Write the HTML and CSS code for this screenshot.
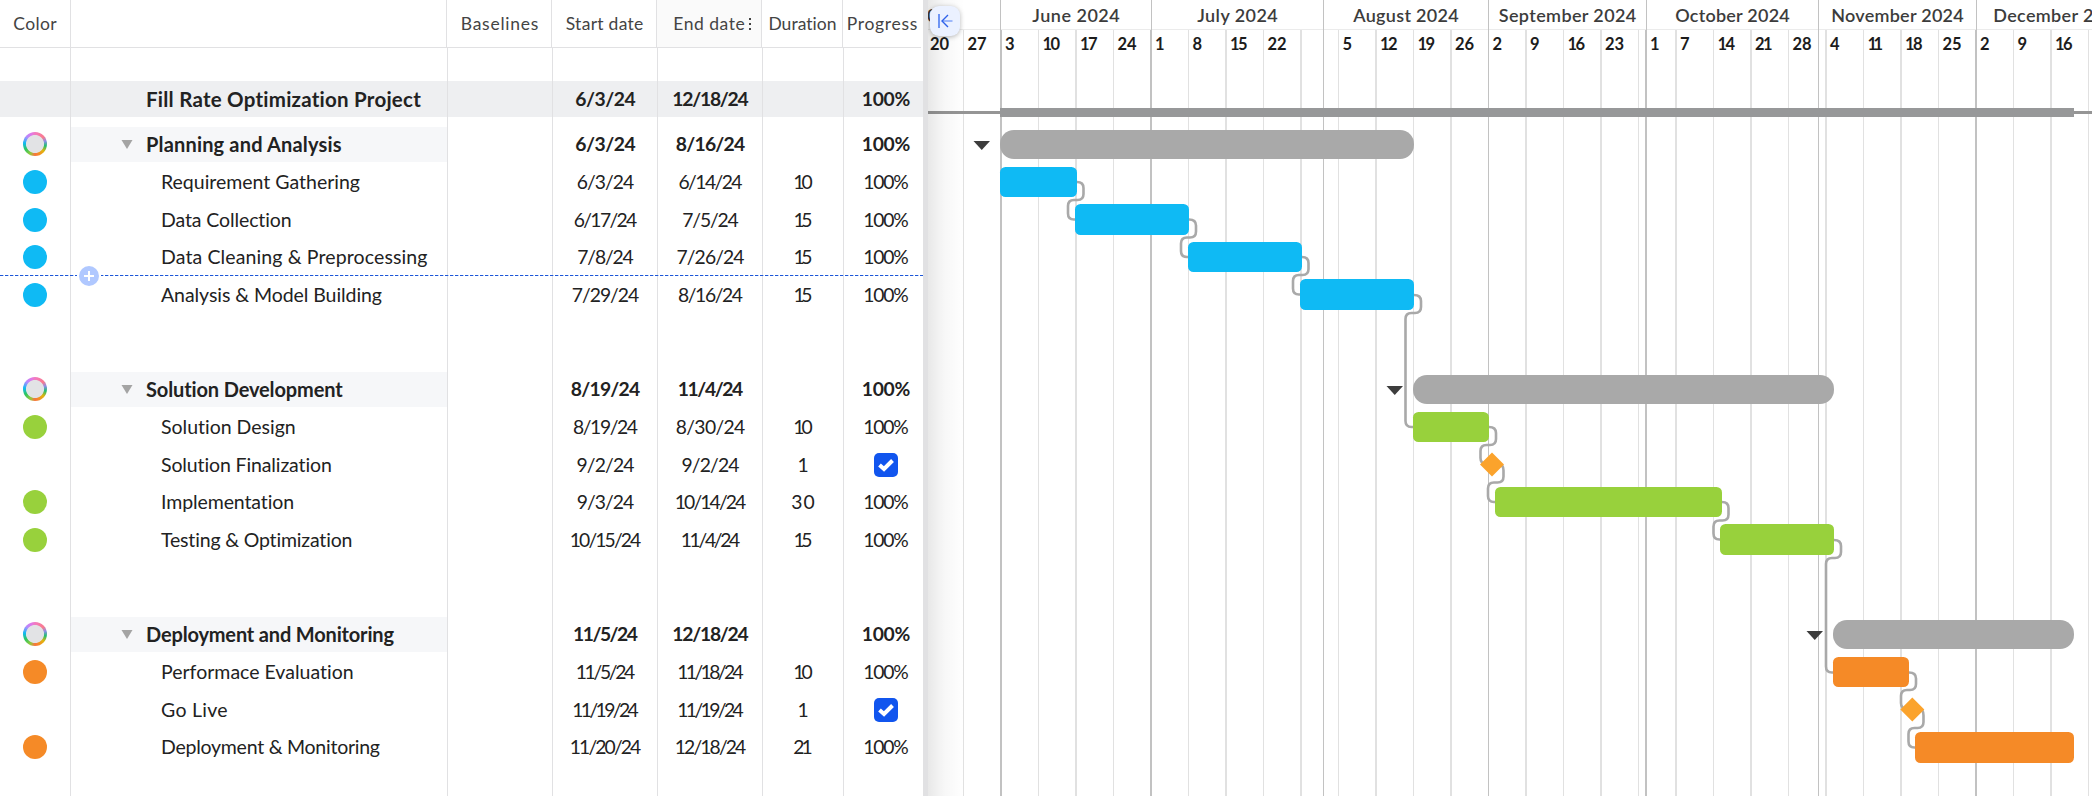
FILE: index.html
```html
<!DOCTYPE html>
<html lang="en">
<head>
<meta charset="utf-8">
<title>Fill Rate Optimization Project</title>
<link rel="stylesheet" href="styles.css">
</head>
<body>
<main class="app">
  <section class="table">
    <div class="thead">
      <div class="th th-color"><span data-w="42">Color</span></div>
      <div class="th th-name"></div>
      <div class="th th-base"><span data-w="76">Baselines</span></div>
      <div class="th th-start"><span data-w="76">Start date</span></div>
      <div class="th th-end"><span data-w="70">End date</span><i class="dots"></i></div>
      <div class="th th-dur"><span data-w="67">Duration</span></div>
      <div class="th th-prog"><span data-w="69">Progress</span></div>
    </div>
    <div class="tbody" id="rows"></div>
    <div class="insert-line"><svg class="plus" width="24" height="20" viewBox="0 0 24 20"><rect width="24" height="20" fill="#fff"/><circle cx="12" cy="10" r="10" fill="#b0c8ff"/><path d="M12 5v10M7 10h10" stroke="#fff" stroke-width="2"/></svg></div>
  </section>
  <div class="divider"></div>
  <section class="chart">
    <svg class="canvas" id="canvas" width="1164" height="796" viewBox="928 0 1164 796"></svg>
    <div class="months" id="months"></div>
    <div class="weeks" id="weeks"></div>
    <div class="edge-shadow"></div>
    <div class="collapse"><svg width="30" height="30" viewBox="0 0 30 30" fill="none" stroke-width="1.4"><path d="M9 8v14" stroke="#3a6df0"/><path d="M22.5 15H12" stroke="#7da0f8"/><path d="M18 9l-6 6 6 6" stroke="#2f62ea"/></svg></div>
  </section>
</main>
<script src="app.js"></script>
</body>
</html>
```
FILE: styles.css
```css
* { box-sizing: border-box; }
body { margin: 0; background: #fff; font-family: Lato, "Open Sans", sans-serif; color: #222; overflow: hidden; }
.app { display: flex; width: 2092px; height: 796px; overflow: hidden; }
span { white-space: nowrap; }

/* task table */
.table { position: relative; width: 923px; flex: none; }
.thead { display: flex; width: 921px; height: 48px; border-bottom: 1px solid #e1e1e3; }
.th { flex: none; display: flex; align-items: center; justify-content: center; border-right: 1px solid #e1e1e3; font-size: 17.5px; color: #444; }
.th-color { width: 71px; }
.th-name { width: 376px; }
.th-base, .th-start, .th-end { width: 105px; }
.th-base, .th-start { padding-left: 1px; }
.th-end { background: #fafafa; position: relative; }
.dots { position: absolute; right: 10px; top: 18px; width: 2px; height: 12px; background: linear-gradient(#444 2px, transparent 2px 5px, #444 5px 7px, transparent 7px 10px, #444 10px); }
.th-dur { width: 81px; padding-left: 1px; }
.th-prog { width: 78px; border: 0; }
.tbody { height: 748px; }
.row { display: flex; height: 38px; line-height: 38px; font-size: 19.5px; }
.row.short { height: 37px; }
.row.first { height: 33px; }
.row.after { height: 8px; }
.row.gap { height: 56px; }
.row.last { height: 30px; }
.row.project { height: 36px; line-height: 36px; font-size: 20.5px; background: #eeeff1; font-weight: 700; }
.row.group { font-weight: 700; font-size: 20px; }
.cell { flex: none; border-right: 1px solid #e1e1e3; display: flex; justify-content: center; }
.c-color { width: 71px; padding-top: 7px; }
.c-name { width: 377px; justify-content: flex-start; padding-left: 90px; }
.project .c-name, .group .c-name { padding-left: 75px; }
.group .c-name { background: linear-gradient(#fff 2px, #f6f7f9 2px 37px, #fff 37px); padding-left: 50px; }
.toggle { width: 25px; flex: none; padding-top: 15px; line-height: 0; }
.c-base, .c-start, .c-end { width: 105px; }
.c-start, .c-end, .c-dur, .c-prog { font-size: 19.3px; }
.c-start, .c-end { padding-left: 1px; }
.c-dur { width: 81px; }
.c-prog { width: 79px; border: 0; padding-left: 5px; }
.dot { width: 24px; height: 24px; border-radius: 50%; }
.blue { background: #0fbaf4; }
.green { background: #98d13c; }
.orange { background: #f58a27; }
.multi { background: radial-gradient(circle, #e2e3e5 8.6px, transparent 9.4px), conic-gradient(#f27bc0, #fb7a8c 50deg, #8b8fe8 75deg, #21c070 100deg, #e2b50c 130deg, #f58a27 160deg, #f8743f 180deg, #98c83c 205deg, #2fc75b 240deg, #0fbaf4 275deg, #b08cff 310deg, #e078e8 340deg, #f27bc0); }
.check { margin-top: 7px; }
.insert-line { position: absolute; left: 0; top: 275px; width: 923px; height: 1px; background: repeating-linear-gradient(90deg, #1c56d8 0 3px, #b4c8f4 3px 4px, #fff 4px 5px); }
.plus { position: absolute; left: 77px; top: -9px; }
.divider { width: 5px; flex: none; background: #e1e1e3; }

/* timeline */
.chart { position: relative; flex: 1; overflow: hidden; }
.canvas { position: absolute; left: 0; top: 0; }
.months { position: relative; display: flex; height: 30px; margin-left: -93px; border-bottom: 1px solid #ebebeb; }
.month { flex: none; text-align: center; border-right: 1px solid #c2c2c2; font-size: 18px; font-weight: 600; color: #3c3c3c; line-height: 30px; height: 30px; }
.weeks { position: relative; display: flex; margin-left: -3px; font-size: 16.5px; font-weight: 700; color: #1c1c1c; line-height: 28px; }
.week { flex: none; padding-left: 5px; height: 28px; }
.edge-shadow { position: absolute; left: 0; top: 0; width: 36px; height: 796px; background: linear-gradient(90deg, rgba(0,0,0,.09), rgba(0,0,0,.03) 45%, transparent); }
.collapse { position: absolute; left: 2px; top: 6px; width: 30px; height: 30px; border-radius: 9px; background: #ebf1ff; box-shadow: 0 1px 5px rgba(0,0,0,.28); }
```
FILE: app.js
```js
// [kind, color, name, name width, start, width, end, width, duration, width]
const ROWS = [
  ['first'],
  ['project', '', 'Fill Rate Optimization Project', 274, '6/3/24', 59, '12/18/24', 75],
  ['after'],
  ['group', 'multi', 'Planning and Analysis', 194, '6/3/24', 59, '8/16/24', 68],
  ['task', 'blue', 'Requirement Gathering', 197.5, '6/3/24', 56, '6/14/24', 62.5, '10', 18],
  ['task short', 'blue', 'Data Collection', 129.5, '6/17/24', 62, '7/5/24', 55, '15', 17.5],
  ['task', 'blue', 'Data Cleaning & Preprocessing', 265, '7/8/24', 55, '7/26/24', 66.5, '15', 17.5],
  ['task', 'blue', 'Analysis & Model Building', 219.5, '7/29/24', 66, '8/16/24', 63.5, '15', 17.5],
  ['gap'],
  ['group', 'multi', 'Solution Development', 195.5, '8/19/24', 68, '11/4/24', 64],
  ['task', 'green', 'Solution Design', 133.5, '8/19/24', 63.5, '8/30/24', 68, '10', 18],
  ['task short', 'check', 'Solution Finalization', 170, '9/2/24', 56.5, '9/2/24', 56.5, '1', 6],
  ['task', 'green', 'Implementation', 132, '9/3/24', 56, '10/14/24', 70, '30', 22],
  ['task', 'green', 'Testing & Optimization', 191, '10/15/24', 70, '11/4/24', 58, '15', 17.5],
  ['gap'],
  ['group', 'multi', 'Deployment and Monitoring', 246.5, '11/5/24', 63.5, '12/18/24', 75],
  ['task', 'orange', 'Performace Evaluation', 191.5, '11/5/24', 58, '11/18/24', 65, '10', 18],
  ['task short', 'check', 'Go Live', 65, '11/19/24', 65, '11/19/24', 65, '1', 6],
  ['task', 'orange', 'Deployment & Monitoring', 217.5, '11/20/24', 70, '12/18/24', 70, '21', 18],
  ['last']
];
const text = (t, w) => t ? `<span data-w="${w}">${t.replace('&', '&amp;')}</span>` : '';
const CHECK = '<svg class="check" width="24" height="24" viewBox="0 0 24 24"><rect width="24" height="24" rx="5" fill="#1155ee"/><path d="M5.5 12l4.5 4 8.5-8.5" fill="none" stroke="#fff" stroke-width="4"/></svg>';
const TOGGLE = '<div class="toggle"><svg width="12" height="9"><path d="M.5 0h11L6 9z" fill="#a4a4a4"/></svg></div>';
document.getElementById('rows').innerHTML = ROWS.map(([kind, color, name, nw, s, sw, e, ew, d, dw]) => {
  const bold = kind === 'project' || kind === 'group';
  const dot = color && color !== 'check' ? `<div class="dot ${color}"></div>` : '';
  const prog = !name ? '' : color === 'check' ? CHECK : text('100%', bold ? 47 : 44);
  return `<div class="row ${kind}"><div class="cell c-color">${dot}</div>` +
    `<div class="cell c-name">${kind === 'group' ? TOGGLE : ''}${text(name, nw)}</div><div class="cell c-base"></div>` +
    `<div class="cell c-start">${text(s, sw)}</div><div class="cell c-end">${text(e, ew)}</div>` +
    `<div class="cell c-dur">${text(d, dw)}</div><div class="cell c-prog">${prog}</div></div>`;
}).join('');

// timeline header
document.getElementById('months').innerHTML = [
  ['May 2024', 166, 81], ['June 2024', 151, 86], ['July 2024', 172, 79], ['August 2024', 165, 104],
  ['September 2024', 158, 136], ['October 2024', 172, 113], ['November 2024', 158, 131], ['December 2024', 166, 131]
].map(([t, w, tw]) => `<div class="month" style="width:${w}px">${text(t, tw)}</div>`).join('');
document.getElementById('weeks').innerHTML =
  '20 27 3 10 17 24 1 8 15 22 - 5 12 19 26 2 9 16 23 -7.5 1.30 7 14 21 28 4 11 18 25 2 9 16'.split(' ').map(v => {
    let w = 37.5, t = v;
    if (v === '-') t = '';
    if (v === '-7.5') { w = 7.5; t = ''; }
    if (v === '1.30') { w = 30; t = '1'; }
    const tw = t === '11' ? 14 : t === '21' ? 16 : t[0] === '1' ? 16 : 17.5;
    return `<div class="week" style="width:${w}px">${text(t, tw)}</div>`;
  }).join('');

// timeline canvas: grid, links, bars
const g = [];
const rect = (x, y, x2, y2, fill, r = 0) => g.push(`<rect x="${x}" y="${y}" width="${x2 - x}" height="${y2 - y}" rx="${r}" fill="${fill}"/>`);
for (let n = -1; n < 30; n++) {
  const x = 1000 + 37.5 * n;
  rect(Math.ceil(x), 30, Math.ceil(x) + (n % 2 ? 1 : 2), 796, '#e1e1e1');
}
[[1000, 2], [1150, 2], [1323, 1], [1488, 1], [1645, 2], [1818, 1], [1975, 2]].forEach(([x, w]) => rect(x, 30, x + w, 796, '#c2c2c2'));
rect(928, 111, 2092, 114, '#959595');
rect(1000, 108, 2074, 117, '#979899');
const path = d => g.push(`<path d="${d}" fill="none" stroke="#a9a9a9" stroke-width="2.6"/>`);
function link(x1, y1, xr, ym, xl, x2, y2) {
  path(`M${x1} ${y1}Q${xr} ${y1} ${xr} ${y1 + 6}V${ym - 6}Q${xr} ${ym} ${xr - 6} ${ym}H${xl + 6}Q${xl} ${ym} ${xl} ${ym + 6}V${y2 - 6}Q${xl} ${y2} ${xl + 6} ${y2}H${x2}`);
}
link(1077, 182, 1083.5, 200, 1068, 1076, 219.5);
link(1189, 219.5, 1196, 237.5, 1181, 1189, 257);
link(1302, 257, 1308.5, 275, 1293, 1301, 294.5);
link(1414, 295, 1421, 313, 1405.5, 1414, 427);
link(1489, 427, 1496, 445, 1480.5, 1488, 464);
link(1499, 464.5, 1503.5, 482.5, 1488, 1496, 502);
link(1722, 502, 1728.5, 520.5, 1713.5, 1721, 539.5);
link(1834, 540, 1841, 558, 1826, 1834, 672.5);
link(1909, 672.5, 1916, 690, 1901, 1908, 709);
link(1920, 709.5, 1923.5, 728, 1908.5, 1916, 747.5);
const GRAY = '#a9a9a9', BLUE = '#0fbaf4', GREEN = '#98d13c', ORANGE = '#f58a27';
rect(1000, 130, 1414, 159, GRAY, 14);
rect(1000, 167, 1077, 197, BLUE, 5.5);
rect(1075, 204, 1189, 235, BLUE, 5.5);
rect(1188, 242, 1302, 272, BLUE, 5.5);
rect(1300, 279, 1414, 310, BLUE, 5.5);
rect(1413, 375, 1834, 404, GRAY, 14);
rect(1413, 412, 1489, 442, GREEN, 5.5);
rect(1495, 487, 1722, 517, GREEN, 5.5);
rect(1720, 524, 1834, 555, GREEN, 5.5);
rect(1833, 620, 2074, 649, GRAY, 14);
rect(1833, 657, 1909, 687, ORANGE, 5.5);
rect(1915, 732, 2074, 763, ORANGE, 5.5);
[[1492, 464.5], [1912.3, 709.5]].forEach(([x, y]) => g.push(`<path d="M${x - 12} ${y}l12-12 12 12-12 12z" fill="#fba32c"/>`));
[[973.5, 141], [1386.5, 386], [1806.5, 631]].forEach(([x, y]) => g.push(`<path d="M${x} ${y}h16.5l-8.25 9z" fill="#3d3d3d"/>`));
document.getElementById('canvas').innerHTML = g.join('');

document.querySelectorAll('[data-w]').forEach(el => {
  const n = el.textContent.length;
  if (n < 2) return;
  const ls = (+el.dataset.w + 1.5 - el.getBoundingClientRect().width) / (n - 1);
  el.style.letterSpacing = ls + 'px';
  el.style.marginRight = -ls + 'px';
});
```
